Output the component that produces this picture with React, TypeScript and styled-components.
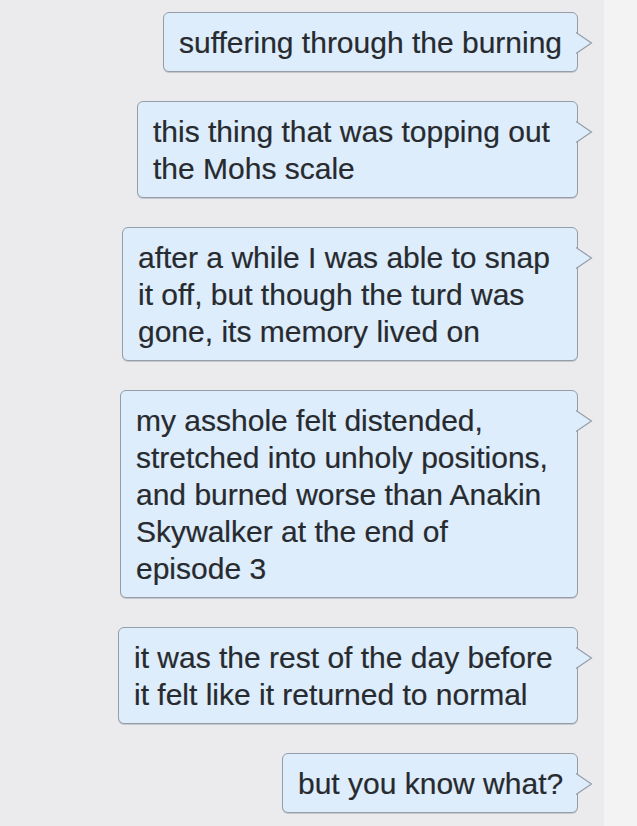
import React, { FC } from 'react';
import styled, { createGlobalStyle } from 'styled-components';

const GlobalStyle = createGlobalStyle`
  html, body {
    margin: 0;
    padding: 0;
    background: #ebebed;
  }
`;

const Screen = styled.div`
  width: 637px;
  height: 826px;
  display: flex;
  overflow: hidden;
  background: #ebebed;
  font-family: "Liberation Sans", Arial, sans-serif;
`;

const Thread = styled.div`
  flex: 1;
  display: flex;
  flex-direction: column;
  align-items: flex-end;
  gap: 29px;
  padding: 12px 26px 0 0;
`;

const Gutter = styled.div`
  width: 33px;
  background: #f3f3f4;
`;

const Bubble = styled.div<{ $w: number }>`
  position: relative;
  box-sizing: border-box;
  width: ${(p) => p.$w}px;
  padding: 10.5px 15px;
  background: #ddedfb;
  border: 1px solid #959ea8;
  border-radius: 6px;
  box-shadow: 0 1px 0 rgba(110, 120, 130, 0.3);
  color: #272a2f;
  font-size: 30px;
  line-height: 37px;
  white-space: nowrap;
  -webkit-text-stroke: 0.2px #272a2f;
`;

const Tail = styled.svg`
  position: absolute;
  right: -16px;
  top: 19px;
  width: 17px;
  height: 22px;
  overflow: visible;
`;

const messages: { w: number; lines: string[] }[] = [
  { w: 415, lines: ['suffering through the burning'] },
  { w: 441, lines: ['this thing that was topping out', 'the Mohs scale'] },
  {
    w: 456,
    lines: [
      'after a while I was able to snap',
      'it off, but though the turd was',
      'gone, its memory lived on',
    ],
  },
  {
    w: 458,
    lines: [
      'my asshole felt distended,',
      'stretched into unholy positions,',
      'and burned worse than Anakin',
      'Skywalker at the end of',
      'episode 3',
    ],
  },
  {
    w: 460,
    lines: ['it was the rest of the day before', 'it felt like it returned to normal'],
  },
  { w: 296, lines: ['but you know what?'] },
];

const Message: FC<{ w: number; lines: string[] }> = ({ w, lines }) => (
  <Bubble $w={w}>
    {lines.map((line, i) => (
      <React.Fragment key={i}>
        {i > 0 && <br />}
        {line}
      </React.Fragment>
    ))}
    <Tail viewBox="0 0 17 22">
      <path d="M0 0.5 L15.5 11 L0 21.5" fill="#ddedfb" stroke="#959ea8" strokeWidth="1.2" />
    </Tail>
  </Bubble>
);

export default function App() {
  return (
    <Screen>
      <GlobalStyle />
      <Thread>
        {messages.map((m, i) => (
          <Message key={i} w={m.w} lines={m.lines} />
        ))}
      </Thread>
      <Gutter />
    </Screen>
  );
}
